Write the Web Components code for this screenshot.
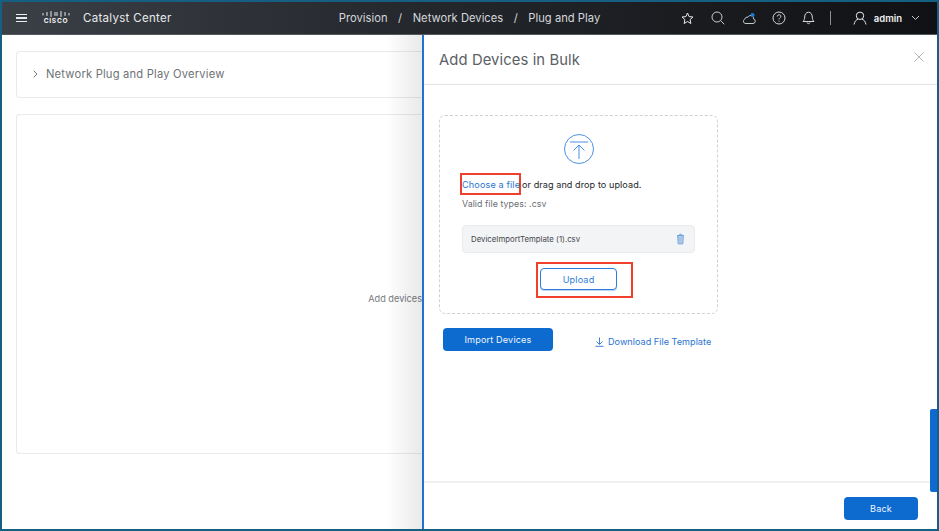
<!DOCTYPE html>
<html>
<head>
<meta charset="utf-8">
<title>Add Devices in Bulk</title>
<style>
  html, body { margin: 0; height: 100%; }
  body { font-family: Inter, "Liberation Sans", sans-serif; background: #fff; overflow: hidden; }
</style>
</head>
<body>
<app-frame>
  <top-bar slot="top"></top-bar>
  <pnp-page slot="page"></pnp-page>
  <bulk-panel slot="panel"></bulk-panel>
</app-frame>

<script>
const UPLOAD_ICON = `<svg width="30" height="30" viewBox="0 0 30 30" fill="none" stroke="#4a90e2" stroke-width="1"><circle cx="15" cy="15" r="14.5"/><path d="M6 8h18M15 25V11M9.500 16.500L15 11l5.500 5.500"/></svg>`;

class AppFrame extends HTMLElement {
  constructor() {
    super();
    this.attachShadow({ mode: "open" });
    this.shadowRoot.innerHTML = `
      <style>
        :host { display: block; width: 939px; height: 531px; box-sizing: border-box;
          border: 2px solid #156082; overflow: hidden; }
        .wrap { display: flex; flex-direction: column; height: 100%; }
        .body { flex: 1; display: flex; min-height: 0; position: relative; }
        .left { width: 420px; flex: none; }
        .right { flex: 1; min-width: 0; display: flex; }
      </style>
      <div class="wrap">
        <slot name="top"></slot>
        <div class="body">
          <div class="left"><slot name="page"></slot></div>
          <div class="right"><slot name="panel"></slot></div>
        </div>
      </div>`;
  }
}

class TopBar extends HTMLElement {
  constructor() {
    super();
    this.attachShadow({ mode: "open" });
    this.shadowRoot.innerHTML = `
      <style>
        :host { display: block; height: 33px; flex: none; color: #e8eaec; font-size: 11.2px;
          background: linear-gradient(90deg, #3b4046 0%, #24272c 45%, #101114 100%);
          box-shadow: inset 0 -1px 0 #55585c; }
        .bar { display: grid; grid-template-columns: 1fr auto 1fr; align-items: center; height: 32px; }
        .left { display: flex; align-items: center; padding-left: 14px; }
        .burger { display: flex; flex-direction: column; gap: 2px; width: 11px; margin-right: 15px; }
        .burger i { display: block; height: 1.6px; background: #e8eaec; }
        .logo { width: 28px; margin-right: 13px; display: flex; flex-direction: column; align-items: center; gap: 1px; }
        .logo b { font: 700 6.6px/7px Inter, sans-serif; letter-spacing: .7px; color: #f4f4f4; }
        .name { font-size: 11.5px; letter-spacing: .3px; }
        .crumbs { display: flex; gap: 10.5px; color: #d5d8db; letter-spacing: .02px; }
        .right { display: flex; align-items: center; justify-content: flex-end; padding-right: 17px; }
        svg { display: block; }
        .sep { width: 1px; height: 14px; background: #8b8e92; margin: 0 22px 0 15px; }
        .user { font-size: 9.5px; font-weight: 600; margin: 0 9px 0 7px; color: #f0f0f0; }
      </style>
      <div class="bar">
        <div class="left">
          <div class="burger"><i></i><i></i><i></i></div>
          <div class="logo">
            <svg width="28" height="6" viewBox="0 0 28 6" stroke="#e8eaec" stroke-width="1" stroke-linecap="round">
              <path d="M1 2.500v1.500M5 1.500v3M9 .5v5M13 1.500v3M15 1.500v3M19 .5v5M23 1.500v3M27 2.500v1.500"/>
            </svg>
            <b>CISCO</b>
          </div>
          <span class="name">Catalyst Center</span>
        </div>
        <div class="crumbs"><span>Provision</span><span>/</span><span>Network Devices</span><span>/</span><span>Plug and Play</span></div>
        <div class="right">
          <svg width="13" height="13" viewBox="0 0 13 13" fill="none" stroke="#e8eaec"><path d="M6.500 1l1.600 3.600 3.900.4-2.900 2.600.8 3.900-3.400-2-3.400 2 .8-3.900L1 5l3.900-.4z"/></svg>
          <svg style="margin-left:17px" width="14" height="14" viewBox="0 0 14 14" fill="none" stroke="#c8cbce"><circle cx="6" cy="6" r="5"/><path d="M9.700 9.700l3.600 3.600"/></svg>
          <svg style="margin-left:17px" width="14" height="13" viewBox="0 0 14 13" fill="none" stroke="#c8cbce"><path d="M4 11.500h7a2.300 2.300 0 0 0 .6-4.500c0-2-.8-3.500-2.600-3.500C7.500 3.500 6.500 4 6 5.200 4.500 4.800 3 5.700 2.800 7.200 1 7.600.6 11.500 4 11.500z"/><circle cx="10.500" cy="3" r="2" fill="#1f7be0" stroke="none"/></svg>
          <svg style="margin-left:16px" width="14" height="14" viewBox="0 0 14 14" fill="none" stroke="#d5d8db"><circle cx="7" cy="7" r="6"/><path d="M5.300 5.500c0-2.300 3.600-2.300 3.600-.1 0 1.400-1.900 1.400-1.900 3M7 9.600v1"/></svg>
          <svg style="margin-left:16px" width="13" height="14" viewBox="0 0 13 14" fill="none" stroke="#d5d8db"><path d="M1 10.500h11c-1.300-1.300-1.700-2.500-1.700-4.500 0-2.600-1.500-4.800-3.800-4.800S2.700 3.400 2.700 6c0 2-.4 3.200-1.700 4.500zM5 11.500c.3 1.500 2.700 1.500 3 0"/></svg>
          <div class="sep"></div>
          <svg width="14" height="14" viewBox="0 0 14 14" fill="none" stroke="#e8eaec"><circle cx="7" cy="4.800" r="3.700"/><path d="M1 13.500c.6-3.200 2.500-5 4-5.300M13 13.500c-.6-3.200-2.500-5-4-5.300"/></svg>
          <span class="user">admin</span>
          <svg width="9" height="6" viewBox="0 0 9 6" fill="none" stroke="#c8cbce"><path d="M1 1l3.500 3.500L8 1"/></svg>
        </div>
      </div>`;
  }
}

class PnpPage extends HTMLElement {
  constructor() {
    super();
    this.attachShadow({ mode: "open" });
    this.shadowRoot.innerHTML = `
      <style>
        :host { display: block; height: 100%; box-sizing: border-box; padding: 16px 0 0 14px; position: relative; background: #fff; }
        .card { box-sizing: border-box; border: 1px solid #e8eaec; border-right: 0; border-radius: 4px 0 0 4px; background: #fff; }
        .over { height: 47px; display: flex; align-items: center; color: #6e7377; font-size: 11.2px; letter-spacing: .19px; padding: 0 0 2px 16px; gap: 8px; }
        .big { height: 340px; margin-top: 16px; display: flex; align-items: center; justify-content: flex-end; font-size: 9.2px; color: #75797d; }
        .big span { position: relative; top: 14px; }
        .shade { position: absolute; top: 0; right: 0; bottom: 0; width: 36px;
          background: linear-gradient(90deg, rgba(0,0,0,0), rgba(0,0,0,.085)); }
      </style>
      <div class="card over">
        <svg width="5" height="8" viewBox="0 0 5 8" fill="none" stroke="#777"><path d="M.7.7L4 4 .7 7.300"/></svg>
        <span>Network Plug and Play Overview</span>
      </div>
      <div class="card big"><span>Add devices</span></div>
      <div class="shade"></div>`;
  }
}

class CcButton extends HTMLElement {
  constructor() {
    super();
    this.attachShadow({ mode: "open" });
    this.shadowRoot.innerHTML = `
      <style>
        :host { display: flex; align-items: center; justify-content: center; box-sizing: border-box; flex: none;
          border-radius: 4px; font-size: 9.1px; font-weight: 400; letter-spacing: .16px;
          background: #0d6bd0; color: #eef5fc; }
        :host([outline]) { background: #fff; color: #2f7ddb; border: 1px solid #2f7ddb; box-shadow: 0 1px 0 #bcd6f4; }
      </style>
      <slot></slot>`;
  }
}

class FileRow extends HTMLElement {
  constructor() {
    super();
    this.attachShadow({ mode: "open" });
    this.shadowRoot.innerHTML = `
      <style>
        :host { display: flex; align-items: center; justify-content: space-between; box-sizing: border-box;
          width: 233px; height: 28px; padding: 0 9px 0 8px; background: #f3f4f6; border: 1px solid #e9ebee; border-radius: 4px;
          font-size: 7.8px; color: #44484c; }
      </style>
      <slot></slot>
      <svg width="9" height="12" viewBox="0 0 9 12" fill="#a9c5e8" stroke="#6f9fd8" stroke-width=".7"><path d="M1 2.500h7M3 2.500c0-2 3-2 3 0M1.500 2.500l.6 8.500h4.800l.6-8.500z"/></svg>`;
  }
}

class DropZone extends HTMLElement {
  constructor() {
    super();
    this.attachShadow({ mode: "open" });
    this.shadowRoot.innerHTML = `
      <style>
        :host { display: block; box-sizing: border-box; width: 279px; height: 199px; border: 1px dashed #cfd2d5; border-radius: 6px; padding: 18px 22px 0; }
        .icon { display: flex; justify-content: center; margin-bottom: 9px; }
        .line { display: flex; align-items: center; font-size: 9.1px; letter-spacing: .07px; color: #24272a; height: 22px; margin-left: -2px; }
        .pick { box-sizing: border-box; height: 22px; width: 61px; display: flex; align-items: center; white-space: nowrap; letter-spacing: .14px;
          border: 2px solid #f0402c; color: #2a74cf; margin-right: 1px; }
        .valid { font-size: 8.8px; letter-spacing: .06px; color: #6a6e72; height: 18px; line-height: 18px; margin-bottom: 12px; }
        .up { margin: 9px 0 0 74px; }
        .box { box-sizing: border-box; width: 97px; height: 36px; border: 2px solid #f0402c; padding: 4px 0 0 2px; }
        cc-button { width: 77px; height: 22px; }
      </style>
      <div class="icon">${UPLOAD_ICON}</div>
      <div class="line"><span class="pick">Choose a file</span><span>or drag and drop to upload.</span></div>
      <div class="valid">Valid file types: .csv</div>
      <file-row>DeviceImportTemplate (1).csv</file-row>
      <div class="up"><div class="box"><cc-button outline>Upload</cc-button></div></div>`;
  }
}

class BulkPanel extends HTMLElement {
  constructor() {
    super();
    this.attachShadow({ mode: "open" });
    this.shadowRoot.innerHTML = `
      <style>
        :host { display: flex; flex-direction: column; flex: 1; box-sizing: border-box; background: #fff; border-left: 2px solid #2273cf; position: relative; }
        header { height: 50px; flex: none; box-sizing: border-box; display: flex; align-items: center; justify-content: space-between;
          padding: 0 13px 0 15px; border-bottom: 1px solid #dfe2e6; font-size: 14.8px; color: #5b6065; letter-spacing: .1px; }
        header svg { margin-top: -5px; }
        .main { flex: 1; padding: 30px 0 0 15px; }
        .actions { display: flex; align-items: center; margin-top: 14px; padding-left: 4px; }
        .import { width: 110px; height: 23px; }
        .dl { display: flex; align-items: center; gap: 4px; margin: 4px 0 0 42px; font-size: 9.1px; letter-spacing: .02px; color: #2a74cf; }
        footer { height: 48px; flex: none; box-sizing: border-box; border-top: 2px solid #eeeff1; display: flex; justify-content: flex-end; padding: 14px 19px 0 0; }
        .back { width: 74px; height: 23px; }
        .tab { position: absolute; right: 0; top: 374px; width: 7px; height: 83px; background: #0d6bd0; border-radius: 2px 0 0 2px; }
      </style>
      <header>
        <span>Add Devices in Bulk</span>
        <svg width="10" height="10" viewBox="0 0 10 10" fill="none" stroke="#a8acb0" stroke-width=".9"><path d="M.5.5l9 9M9.500.5l-9 9"/></svg>
      </header>
      <div class="main">
        <drop-zone></drop-zone>
        <div class="actions">
          <cc-button class="import">Import Devices</cc-button>
          <span class="dl">
            <svg width="9" height="10" viewBox="0 0 9 10" fill="none" stroke="#2a74cf" stroke-width=".9"><path d="M4.500 .5v6.500M1.500 4.500l3 3 3-3M.5 9.300h8"/></svg>
            Download File Template
          </span>
        </div>
      </div>
      <footer><cc-button class="back">Back</cc-button></footer>
      <div class="tab"></div>`;
  }
}

customElements.define("app-frame", AppFrame);
customElements.define("top-bar", TopBar);
customElements.define("pnp-page", PnpPage);
customElements.define("cc-button", CcButton);
customElements.define("file-row", FileRow);
customElements.define("drop-zone", DropZone);
customElements.define("bulk-panel", BulkPanel);
</script>
</body>
</html>
